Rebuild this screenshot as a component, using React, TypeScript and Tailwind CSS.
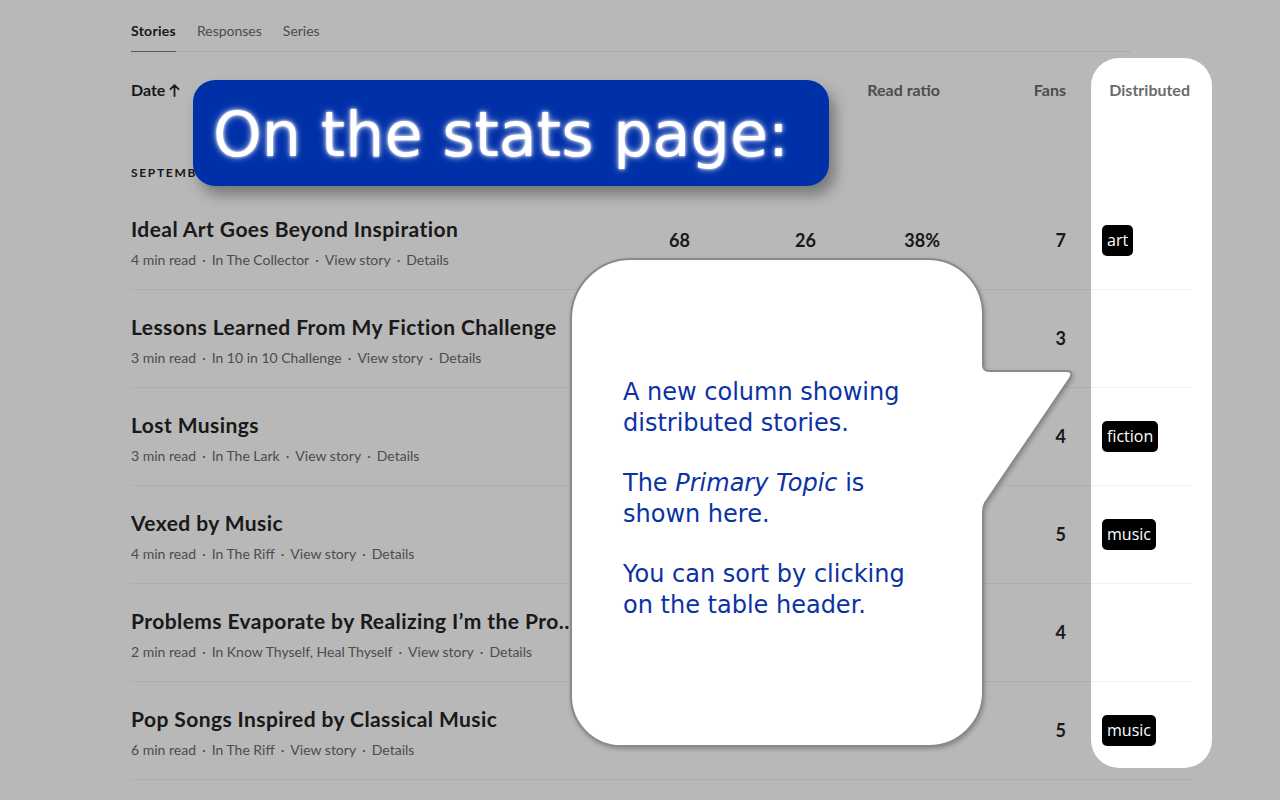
import React from "react";

type Row = {
  title: string;
  mins: number;
  pub: string;
  views: string;
  reads: string;
  ratio: string;
  fans: string;
  tag?: string;
};

const rows: Row[] = [
  { title: "Ideal Art Goes Beyond Inspiration", mins: 4, pub: "The Collector", views: "68", reads: "26", ratio: "38%", fans: "7", tag: "art" },
  { title: "Lessons Learned From My Fiction Challenge", mins: 3, pub: "10 in 10 Challenge", views: "41", reads: "17", ratio: "41%", fans: "3" },
  { title: "Lost Musings", mins: 3, pub: "The Lark", views: "52", reads: "21", ratio: "40%", fans: "4", tag: "fiction" },
  { title: "Vexed by Music", mins: 4, pub: "The Riff", views: "47", reads: "19", ratio: "40%", fans: "5", tag: "music" },
  { title: "Problems Evaporate by Realizing I’m the Problem", mins: 2, pub: "Know Thyself, Heal Thyself", views: "39", reads: "22", ratio: "56%", fans: "4" },
  { title: "Pop Songs Inspired by Classical Music", mins: 6, pub: "The Riff", views: "61", reads: "18", ratio: "30%", fans: "5", tag: "music" },
];

const grid = "grid grid-cols-[450px_109px_126px_124px_126px_126px]";

export default function App() {
  return (
    <div className="relative w-full h-[800px] overflow-hidden bg-white font-['Lato',sans-serif] text-[#242424]">
      <div className="ml-[131px] w-[1061px] pt-[21px]">
        {/* Tabs */}
        <div className="flex w-[1000px] gap-[21px] border-b border-[#ececec] text-[14px] leading-5">
          <div className="-mb-px border-b border-[#7a7a7a] pb-[10px] font-bold tracking-[0.02em] text-[#242424]">Stories</div>
          <div className="pb-[10px] text-[#6b6b6b]">Responses</div>
          <div className="pb-[10px] text-[#6b6b6b]">Series</div>
        </div>

        {/* Header */}
        <div className={`${grid} mt-[28px] h-5 items-center text-[16px] font-bold leading-5 text-[#6b6b6b]`}>
          <div className="flex items-center gap-[4px] text-[#242424]">
            Date
            <svg width="11" height="13" viewBox="0 0 11 13" fill="none" stroke="#242424" strokeWidth="1.8" strokeLinecap="round" strokeLinejoin="round">
              <path d="M5.5 12V1.5M1.5 5.2 5.5 1.2l4 4" />
            </svg>
          </div>
          <div className="text-right">Views</div>
          <div className="text-right">Reads</div>
          <div className="text-right">Read ratio</div>
          <div className="text-right">Fans</div>
          <div className="pr-[2px] text-right">Distributed</div>
        </div>

        {/* Section */}
        <div className="mt-[65px] text-[12px] font-bold uppercase leading-4 tracking-[0.14em] text-[#242424]">
          September 2023
        </div>

        <div className="mt-[11px]">
          {rows.map((r) => (
            <div key={r.title} className={`${grid} h-[98px] border-b border-[#f2f2f2]`}>
              <div className="min-w-0 pt-[23px] pr-[2px]">
                <div className="truncate text-[21px] font-bold leading-7 tracking-[0.02em] text-[#242424]">{r.title}</div>
                <div className="mt-[7px] text-[14px] leading-5 text-[#6b6b6b]">
                  {r.mins} min read<span className="mx-[6px]">·</span>In {r.pub}
                  <span className="mx-[6px]">·</span>View story<span className="mx-[6px]">·</span>Details
                </div>
              </div>
              <div className="flex items-center justify-end text-[18px] font-bold">{r.views}</div>
              <div className="flex items-center justify-end text-[18px] font-bold">{r.reads}</div>
              <div className="flex items-center justify-end text-[18px] font-bold">{r.ratio}</div>
              <div className="flex items-center justify-end text-[18px] font-bold">{r.fans}</div>
              <div className="flex items-center pl-[36px]">
                {r.tag && (
                  <span className="h-[31px] rounded-[5px] bg-black px-[5px] font-['Open_Sans',sans-serif] text-[16px] leading-[31px] text-white">
                    {r.tag}
                  </span>
                )}
              </div>
            </div>
          ))}
        </div>
      </div>

      {/* Spotlight on Distributed column: dims everything else */}
      <div className="pointer-events-none absolute left-[1091px] top-[58px] z-10 h-[710px] w-[121px] rounded-[28px] shadow-[0_0_0_3000px_rgba(0,0,0,0.278)]" />

      {/* Title banner */}
      <div className="absolute left-[193px] top-[80px] z-20 flex h-[106px] w-[636px] items-center rounded-[22px] bg-[#0030a8] pl-[20px] pt-[3px] shadow-[6px_9px_14px_rgba(0,0,0,0.35)]">
        <span className="font-['DejaVu_Sans',sans-serif] text-[62px] leading-none text-white [text-shadow:0_0_3px_#fff,0_0_7px_rgba(255,255,255,0.8)]">
          On the stats page:
        </span>
      </div>

      {/* Speech bubble */}
      <svg
        className="absolute left-[560px] top-[250px] z-20 drop-shadow-[1px_2px_2px_rgba(0,0,0,0.25)]"
        width="520"
        height="510"
        viewBox="0 0 520 510"
      >
        <path
          d="M71 9 L368 9 A55 55 0 0 1 423 64 L423 115 Q423 121 429 121 L506 121 Q514 121 510 128 L425 253 Q423 257 423 262 L423 442 A54 54 0 0 1 369 496 L61 496 A50 50 0 0 1 11 446 L11 69 A60 60 0 0 1 71 9 Z"
          fill="#ffffff"
          stroke="#8a8a8a"
          strokeWidth="2"
        />
      </svg>
      <div className="absolute left-[623px] top-[377px] z-30 font-['DejaVu_Sans',sans-serif] text-[24px] leading-[30.5px] text-[#0b32a4]">
        <div>A new column showing</div>
        <div>distributed stories.</div>
        <div className="h-[30px]" />
        <div>
          The <em>Primary Topic</em> is
        </div>
        <div>shown here.</div>
        <div className="h-[30px]" />
        <div>You can sort by clicking</div>
        <div>on the table header.</div>
      </div>
    </div>
  );
}
